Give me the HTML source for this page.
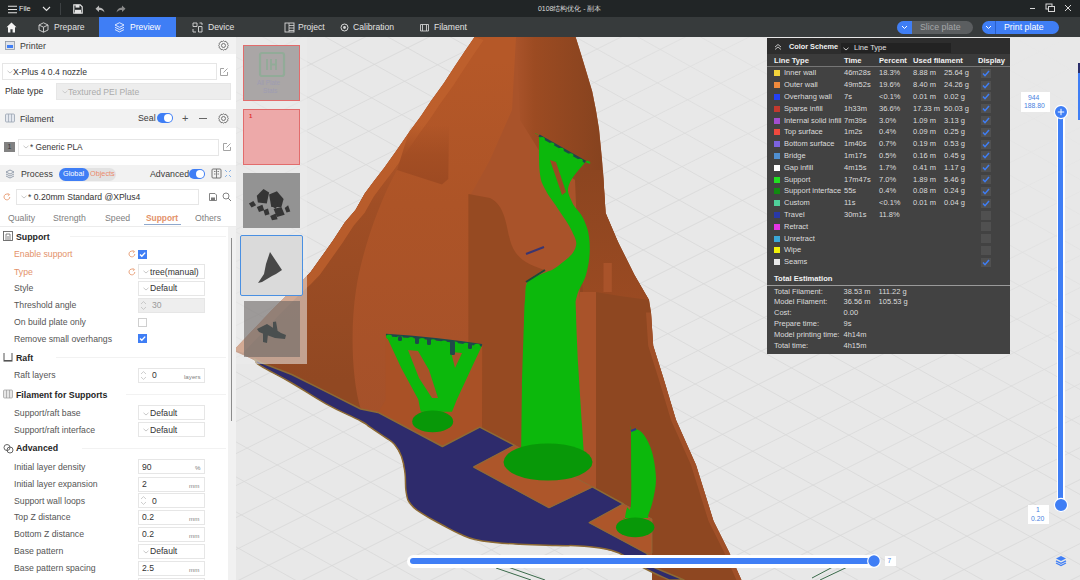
<!DOCTYPE html><html><head><meta charset="utf-8"><style>
*{margin:0;padding:0;box-sizing:border-box}
html,body{width:1080px;height:580px;overflow:hidden;background:#e9e9e9;font-family:"Liberation Sans",sans-serif}
.a{position:absolute;white-space:nowrap}
.tt{color:#e2e2e2;font-size:8.6px;line-height:10px}
.ht{font-size:8.8px;color:#3a3a3a;line-height:10px}
.lbl{font-size:8.7px;color:#555;line-height:10px}
.org{color:#e3926a}
.box{border:1px solid #e2e2e2;background:#fff}
.bt{font-size:8.6px;color:#333;line-height:10px}
.sec{font-size:8.8px;color:#262626;font-weight:bold;line-height:10px}
.unit{font-size:6.2px;color:#808080;line-height:6px}
.lg{font-size:7.5px;color:#dcdcdc;line-height:9px}
.lgb{font-size:7.6px;color:#f2f2f2;font-weight:bold;line-height:9px}
</style></head><body>
<div class="a " style="left:236px;top:37px;width:844px;height:543px;background:#e8e8e8"></div>
<svg class="a" style="left:0;top:0" width="1080" height="580" viewBox="0 0 1080 580"><defs><linearGradient id="fade" x1="1080" y1="37" x2="860" y2="330" gradientUnits="userSpaceOnUse"><stop offset="0" stop-color="#e8e8e8" stop-opacity="1"/><stop offset="0.3" stop-color="#e8e8e8" stop-opacity="0.8"/><stop offset="1" stop-color="#e8e8e8" stop-opacity="0"/></linearGradient><linearGradient id="og" x1="0" y1="0" x2="1" y2="0" gradientUnits="userSpaceOnUse" gradientTransform=""><stop offset="0" stop-color="#bd5d2b"/><stop offset="1" stop-color="#8a4420"/></linearGradient><linearGradient id="cone" x1="440" y1="0" x2="600" y2="0" gradientUnits="userSpaceOnUse"><stop offset="0" stop-color="#bc5c2a"/><stop offset="0.5" stop-color="#b3562a"/><stop offset="0.62" stop-color="#9b4c22"/><stop offset="1" stop-color="#87431f"/></linearGradient></defs><path d="M236 -1343.1 L1080 -870.5 M236 -1308.1 L1080 -835.5 M236 -1273.1 L1080 -800.5 M236 -1238.1 L1080 -765.5 M236 -1203.1 L1080 -730.5 M236 -1168.1 L1080 -695.5 M236 -1133.1 L1080 -660.5 M236 -1098.1 L1080 -625.5 M236 -1063.1 L1080 -590.5 M236 -1028.1 L1080 -555.5 M236 -993.1 L1080 -520.5 M236 -958.1 L1080 -485.5 M236 -923.1 L1080 -450.5 M236 -888.1 L1080 -415.5 M236 -853.1 L1080 -380.5 M236 -818.1 L1080 -345.5 M236 -783.1 L1080 -310.5 M236 -748.1 L1080 -275.5 M236 -713.1 L1080 -240.5 M236 -678.1 L1080 -205.5 M236 -643.1 L1080 -170.5 M236 -608.1 L1080 -135.5 M236 -573.1 L1080 -100.5 M236 -538.1 L1080 -65.5 M236 -503.1 L1080 -30.5 M236 -468.1 L1080 4.5 M236 -433.1 L1080 39.5 M236 -398.1 L1080 74.5 M236 -363.1 L1080 109.5 M236 -328.1 L1080 144.5 M236 -293.1 L1080 179.5 M236 -258.1 L1080 214.5 M236 -223.1 L1080 249.5 M236 -188.1 L1080 284.5 M236 -153.1 L1080 319.5 M236 -118.1 L1080 354.5 M236 -83.1 L1080 389.5 M236 -48.1 L1080 424.5 M236 -13.1 L1080 459.5 M236 21.9 L1080 494.5 M236 56.9 L1080 529.5 M236 91.9 L1080 564.5 M236 126.9 L1080 599.5 M236 161.9 L1080 634.5 M236 196.9 L1080 669.5 M236 231.9 L1080 704.5 M236 266.9 L1080 739.5 M236 301.9 L1080 774.5 M236 336.9 L1080 809.5 M236 371.9 L1080 844.5 M236 406.9 L1080 879.5 M236 441.9 L1080 914.5 M236 476.9 L1080 949.5 M236 511.9 L1080 984.5 M236 546.9 L1080 1019.5 M236 581.9 L1080 1054.5 M236 616.9 L1080 1089.5 M236 651.9 L1080 1124.5 M236 686.9 L1080 1159.5 M236 721.9 L1080 1194.5 M236 756.9 L1080 1229.5 M236 791.9 L1080 1264.5 M236 826.9 L1080 1299.5 M236 861.9 L1080 1334.5 M236 896.9 L1080 1369.5 M236 931.9 L1080 1404.5 M236 966.9 L1080 1439.5 M236 1001.9 L1080 1474.5 M236 1036.9 L1080 1509.5 M236 1071.9 L1080 1544.5 M236 1106.9 L1080 1579.5 M236 1141.9 L1080 1614.5 M236 1176.9 L1080 1649.5 M236 1211.9 L1080 1684.5 M236 1246.9 L1080 1719.5 M236 1281.9 L1080 1754.5 M236 1316.9 L1080 1789.5 M236 1351.9 L1080 1824.5 M236 1386.9 L1080 1859.5 M236 1421.9 L1080 1894.5 M236 -890.4 L1080 -1312.4 M236 -858.4 L1080 -1280.4 M236 -826.4 L1080 -1248.4 M236 -794.4 L1080 -1216.4 M236 -762.4 L1080 -1184.4 M236 -730.4 L1080 -1152.4 M236 -698.4 L1080 -1120.4 M236 -666.4 L1080 -1088.4 M236 -634.4 L1080 -1056.4 M236 -602.4 L1080 -1024.4 M236 -570.4 L1080 -992.4 M236 -538.4 L1080 -960.4 M236 -506.4 L1080 -928.4 M236 -474.4 L1080 -896.4 M236 -442.4 L1080 -864.4 M236 -410.4 L1080 -832.4 M236 -378.4 L1080 -800.4 M236 -346.4 L1080 -768.4 M236 -314.4 L1080 -736.4 M236 -282.4 L1080 -704.4 M236 -250.4 L1080 -672.4 M236 -218.4 L1080 -640.4 M236 -186.4 L1080 -608.4 M236 -154.4 L1080 -576.4 M236 -122.4 L1080 -544.4 M236 -90.4 L1080 -512.4 M236 -58.4 L1080 -480.4 M236 -26.4 L1080 -448.4 M236 5.6 L1080 -416.4 M236 37.6 L1080 -384.4 M236 69.6 L1080 -352.4 M236 101.6 L1080 -320.4 M236 133.6 L1080 -288.4 M236 165.6 L1080 -256.4 M236 197.6 L1080 -224.4 M236 229.6 L1080 -192.4 M236 261.6 L1080 -160.4 M236 293.6 L1080 -128.4 M236 325.6 L1080 -96.4 M236 357.6 L1080 -64.4 M236 389.6 L1080 -32.4 M236 421.6 L1080 -0.4 M236 453.6 L1080 31.6 M236 485.6 L1080 63.6 M236 517.6 L1080 95.6 M236 549.6 L1080 127.6 M236 581.6 L1080 159.6 M236 613.6 L1080 191.6 M236 645.6 L1080 223.6 M236 677.6 L1080 255.6 M236 709.6 L1080 287.6 M236 741.6 L1080 319.6 M236 773.6 L1080 351.6 M236 805.6 L1080 383.6 M236 837.6 L1080 415.6 M236 869.6 L1080 447.6 M236 901.6 L1080 479.6 M236 933.6 L1080 511.6 M236 965.6 L1080 543.6 M236 997.6 L1080 575.6 M236 1029.6 L1080 607.6 M236 1061.6 L1080 639.6 M236 1093.6 L1080 671.6 M236 1125.6 L1080 703.6 M236 1157.6 L1080 735.6 M236 1189.6 L1080 767.6 M236 1221.6 L1080 799.6 M236 1253.6 L1080 831.6 M236 1285.6 L1080 863.6 M236 1317.6 L1080 895.6 M236 1349.6 L1080 927.6 M236 1381.6 L1080 959.6 M236 1413.6 L1080 991.6 M236 1445.6 L1080 1023.6 M236 1477.6 L1080 1055.6 M236 1509.6 L1080 1087.6 M236 1541.6 L1080 1119.6 M236 1573.6 L1080 1151.6 M236 1605.6 L1080 1183.6 M236 1637.6 L1080 1215.6 M236 1669.6 L1080 1247.6 M236 1701.6 L1080 1279.6 M236 1733.6 L1080 1311.6 M236 1765.6 L1080 1343.6 M236 1797.6 L1080 1375.6 M236 1829.6 L1080 1407.6 M236 1861.6 L1080 1439.6 M236 1893.6 L1080 1471.6 M236 1925.6 L1080 1503.6 M236 1957.6 L1080 1535.6 M236 1989.6 L1080 1567.6 M236 2021.6 L1080 1599.6 M236 2053.6 L1080 1631.6 M236 2085.6 L1080 1663.6 M236 2117.6 L1080 1695.6 M236 2149.6 L1080 1727.6 M236 2181.6 L1080 1759.6 M236 2213.6 L1080 1791.6 M236 2245.6 L1080 1823.6 M236 2277.6 L1080 1855.6" stroke="#d8d8d8" stroke-width="0.8" fill="none"/><rect x="236" y="37" width="844" height="543" fill="url(#fade)"/><polygon points="474.6,37 575.6,37 581.1,54.5 586.7,73 592.2,91.6 595.9,110 599,129 602,160 603.5,180 605.6,213 618,242 634.6,275.3 649,300 651,312.6 653.2,345.7 663.6,378.8 676,420 696,465 713.5,521 729,552 741.4,580 669,580 643,567.5 619,553 600,548 580,545.9 556,545.5 520,544.3 495,542.5 475,539.5 460,534 442.4,525 423.1,514.1 411,504.5 406.2,492.4 405,473.1 401.4,456.2 394.1,444.1 384.5,436.9 370,427.2 360.7,421 326,403.8 291.7,383 260.7,365.9 256,361 234,350 252,331 271,311 290,292 302,281 310.7,272 321,257.6 333.4,240 344.8,222.4 355.5,210 364.8,193.4 374.1,181 384.5,167.6 396.9,150 410,131 421,116 431,101 444,83 455,66 465,51 474.6,37" fill="#a9532a"/><linearGradient id="cg2" x1="516" y1="0" x2="600" y2="0" gradientUnits="userSpaceOnUse"><stop offset="0" stop-color="#9c4b22" stop-opacity="0"/><stop offset="0.22" stop-color="#9c4b22" stop-opacity="1"/><stop offset="1" stop-color="#87431f" stop-opacity="1"/></linearGradient><polygon points="516,37 575.6,37 581.1,54.5 586.7,73 592.2,91.6 595.9,110 599,129 602,160 603.5,180 603.5,180 575,180 545,160 520,120" fill="url(#cg2)"/><linearGradient id="fw" x1="0" y1="60" x2="0" y2="420" gradientUnits="userSpaceOnUse"><stop offset="0" stop-color="#b55828"/><stop offset="0.4" stop-color="#ad5427"/><stop offset="1" stop-color="#a5512a"/></linearGradient><polygon points="234,350 252,331 271,311 290,292 302,281 310.7,272 321,257.6 333.4,240 344.8,222.4 355.5,210 364.8,193.4 374.1,181 384.5,167.6 396.9,150 410,131 421,116 431,101 444,83 455,66 465,51 474.6,37 516,37 512,110 490,160 470,196 468,420 378,412 360.7,409 326,391.7 291.7,374.5 262,363 236,352" fill="url(#fw)"/><linearGradient id="sf" x1="0" y1="110" x2="0" y2="380" gradientUnits="userSpaceOnUse"><stop offset="0" stop-color="#ad5529" stop-opacity="0"/><stop offset="0.35" stop-color="#a04e25"/><stop offset="1" stop-color="#914822"/></linearGradient><path d="M421 116 L421 116 L410 131 L396.9 150 L384.5 167.6 L374.1 181 L364.8 193.4 L355.5 210 L344.8 222.4 L333.4 240 L321 257.6 L310.7 272 L302 281 L290 292 L271 311 L252 331 L234 350 L256 361 L291.7 374.5 L326 391.7 L360.7 409 L360.7 409 C352 380 350 330 356 290 C362 250 380 200 397 170 L421 116 Z" fill="url(#sf)"/><polygon points="234,350 252,331 271,311 290,292 302,281 310.7,272 321,257.6 333.4,240 344.8,222.4 355.5,210 364.8,193.4 374.1,181 384.5,167.6 396.9,150 410,131 421,116 431,101 444,83 455,66 465,51 474.6,37 483.6,40 474,54 464,69 453,86 440,104 430,119 419,134 405.9,153 393.5,170.6 383.1,184 373.8,196.4 364.5,213 353.8,225.4 342.4,243 330,260.6 319.7,275 311,284 299,295 280,314 261,334 243,353" fill="#c0622d" opacity="0.75"/><linearGradient id="ng" x1="0" y1="125" x2="0" y2="185" gradientUnits="userSpaceOnUse"><stop offset="0" stop-color="#a24d23" stop-opacity="0"/><stop offset="0.5" stop-color="#a24d23" stop-opacity="0.9"/><stop offset="1" stop-color="#9d4a22"/></linearGradient><path d="M397 170 L442 184.4 L448.3 179 L449 125 L412 122 Z" fill="url(#ng)"/><path d="M468.4 194 L490 198 C505 205 506 225 510 240 C515 260 530 265 545 270 L526 282 L521.2 454 L479.8 427.2 L468.4 421 Z" fill="#964a22"/><polygon points="385.7,334.5 482.2,345.3 482,427 442.4,446.7 378,412.4 385.7,400" fill="#a95126"/><polygon points="575,180 603.5,180 605.6,213 618,242 634.6,275.3 649,300 651,312.6 653.2,345.7 663.6,378.8 676,420 696,465 713.5,521 729,552 741.4,580 652,580 652,519 623.5,504 592.4,486.9 596,300 580,300" fill="#8e4721"/><polygon points="580,292 596,292 596,489 580,480" fill="#a9532a"/><linearGradient id="cg3" x1="0" y1="170" x2="0" y2="300" gradientUnits="userSpaceOnUse"><stop offset="0" stop-color="#8c4520"/><stop offset="1" stop-color="#9a4a22"/></linearGradient><polygon points="575,170 603,170 603.5,180 605.6,213 618,242 634.6,275.3 649,300 620,296 596,292 583,292" fill="url(#cg3)"/><polygon points="603.5,263 611.8,263 611.8,292 603.5,292" fill="#a9532a"/><polygon points="651,312.6 653.2,345.7 663.6,378.8 676,420 696,465 713.5,521 729,552 741.4,580 736.4,580 724,552 708.5,521 691,465 671,420 658.6,378.8 648.2,345.7 646,312.6" fill="#a5532a" opacity="0.8"/><path d="M256.0 361.0 C257.1 362.1 252.4 360.8 260.7 365.9 C269.0 371.0 276.5 374.2 291.7 383.0 C306.9 391.8 309.9 394.9 326.0 403.8 C342.1 412.7 350.4 415.5 360.7 421.0 C371.0 426.5 364.4 423.5 370.0 427.2 C375.6 430.9 378.9 433.0 384.5 436.9 C390.1 440.8 390.2 439.6 394.1 444.1 C398.0 448.6 398.9 449.4 401.4 456.2 C403.9 463.0 403.9 464.7 405.0 473.1 C406.1 481.5 404.8 485.1 406.2 492.4 C407.6 499.7 407.1 499.4 411.0 504.5 C414.9 509.6 415.8 509.3 423.1 514.1 C430.4 518.9 433.8 520.4 442.4 525.0 C451.0 529.6 452.4 530.6 460.0 534.0 C467.6 537.4 466.8 537.5 475.0 539.5 C483.2 541.5 484.5 541.4 495.0 542.5 C505.5 543.6 505.8 543.6 520.0 544.3 C534.2 545.0 542.0 545.1 556.0 545.5 C570.0 545.9 569.7 545.3 580.0 545.9 C590.3 546.5 590.9 546.3 600.0 548.0 C609.1 549.7 609.0 548.5 619.0 553.0 C629.0 557.5 631.3 561.2 643.0 567.5 C654.7 573.8 662.9 577.1 669.0 580.0 L684 580 L653 567 L646.7 553.3 L589.3 522.6 L623.5 504 L592.4 486.9 L549 507.6 L473.8 467 L514.8 445.3 L479.8 427.2 L442.4 446.5 L378 412.4 L360.7 409 L326 391.7 L291.7 374.5 L262 363 L254 359 Z" fill="#2e2b6c" stroke="#8d6b35" stroke-width="1.5" stroke-linejoin="round"/><polygon points="473.8,467 514.8,445.3 592.4,486.9 549,507.6" fill="#ad562a" stroke="#8f6a3a" stroke-width="0.8"/><polygon points="589.3,522.6 623.5,504 652,519 652,553 646.7,553.3" fill="#ad562a" stroke="#8f6a3a" stroke-width="0.8"/><polygon points="385.7,334.5 410,338 440,341 482.2,345.3 471.4,368.3 456.9,399.6 452,411.7 420.7,411.7 418.3,399.6 401.4,368.3" fill="#0cb80c"/><polygon points="408,350 418,351 429,370 438,398 432,398 419,378" fill="#a85229"/><polygon points="451,352 462,353 455,368" fill="#a85229"/><path d="M386 335 Q434 338 482 345.3" stroke="#1d4a4a" stroke-width="2.6" fill="none"/><ellipse cx="389" cy="336.815" rx="3" ry="2.2" fill="#0cb80c"/><ellipse cx="400" cy="337.97" rx="3" ry="2.2" fill="#0cb80c"/><ellipse cx="411" cy="339.125" rx="3" ry="2.2" fill="#0cb80c"/><ellipse cx="422" cy="340.28" rx="3" ry="2.2" fill="#0cb80c"/><ellipse cx="433" cy="341.435" rx="3" ry="2.2" fill="#0cb80c"/><ellipse cx="444" cy="342.59" rx="3" ry="2.2" fill="#0cb80c"/><ellipse cx="455" cy="343.745" rx="3" ry="2.2" fill="#0cb80c"/><ellipse cx="466" cy="344.9" rx="3" ry="2.2" fill="#0cb80c"/><ellipse cx="477" cy="346.055" rx="3" ry="2.2" fill="#0cb80c"/><rect x="398" y="336" width="4" height="5" rx="1.5" fill="#1f4a4a"/><rect x="415" y="337" width="4" height="7" rx="1.5" fill="#1f4a4a"/><rect x="427" y="338" width="4" height="7" rx="1.5" fill="#1f4a4a"/><rect x="450" y="341" width="5" height="14" rx="1.5" fill="#1f4a4a"/><rect x="468" y="343" width="4" height="6" rx="1.5" fill="#1f4a4a"/><ellipse cx="432.7" cy="421.4" rx="20.5" ry="10.9" fill="#089808"/><path d="M539.0 135.5 C539.0 134.6 529.7 130.2 539.0 135.5 C548.3 140.8 576.1 156.6 585.4 161.9 C594.7 167.2 588.7 157.4 585.4 161.9 C582.1 166.4 571.8 176.4 569.1 184.4 C566.4 192.4 569.1 195.0 572.0 202.0 C574.9 209.0 580.3 211.4 583.8 219.6 C587.3 227.8 589.0 232.5 589.6 243.0 C590.2 253.5 589.2 261.8 586.7 272.3 C584.2 282.8 579.1 287.6 577.0 295.7 C574.9 303.8 575.8 299.5 576.0 313.0 C576.2 326.5 577.6 353.0 578.0 363.0 C578.4 373.0 577.2 350.6 578.0 363.0 C578.8 375.4 580.8 406.8 582.0 425.0 C583.2 443.2 583.6 448.2 584.0 454.0 C584.4 459.8 596.6 454.0 584.0 454.0 C571.4 454.0 533.8 454.0 521.2 454.0 C508.6 454.0 521.0 468.2 521.2 454.0 C521.4 439.8 521.8 397.2 522.0 383.0 C522.2 368.8 521.6 395.4 522.0 383.0 C522.4 370.6 523.4 337.6 524.0 321.0 C524.6 304.4 524.2 308.0 525.0 300.0 C525.8 292.0 524.5 286.3 528.1 281.0 C531.7 275.7 536.9 276.4 542.8 273.5 C548.7 270.6 551.0 271.3 557.4 266.4 C563.8 261.5 572.1 255.9 575.0 248.9 C577.9 241.9 575.5 239.5 572.0 231.3 C568.5 223.1 562.7 216.1 557.4 207.9 C552.1 199.7 549.2 197.3 545.7 190.3 C542.2 183.3 541.1 182.8 539.8 172.7 C538.5 162.6 539.2 147.4 539.0 140.0 C538.8 132.6 539.0 136.4 539.0 135.5 Z" fill="#0cb80c"/><polygon points="550,160 556,162 566,192 562,195" fill="#9a4a22"/><path d="M539 135.5 L585.4 161.9" stroke="#1d4a4a" stroke-width="2.4" fill="none"/><ellipse cx="542.0" cy="139.207" rx="2.8" ry="2.2" fill="#0cb80c"/><ellipse cx="551.5" cy="144.6125" rx="2.8" ry="2.2" fill="#0cb80c"/><ellipse cx="561.0" cy="150.018" rx="2.8" ry="2.2" fill="#0cb80c"/><ellipse cx="570.5" cy="155.4235" rx="2.8" ry="2.2" fill="#0cb80c"/><ellipse cx="580.0" cy="160.829" rx="2.8" ry="2.2" fill="#0cb80c"/><path d="M526 282 L545 270" stroke="#1d4a3a" stroke-width="2" fill="none"/><path d="M526 254 L544 247" stroke="#3a3570" stroke-width="2" fill="none"/><ellipse cx="548" cy="462" rx="44.5" ry="18.6" fill="#089808"/><path d="M631.0 431.0 C631.8 430.7 633.8 428.3 636.0 429.0 C638.2 429.7 641.3 431.2 644.0 435.0 C646.7 438.8 650.0 444.8 652.0 452.0 C654.0 459.2 655.8 470.0 656.0 478.0 C656.2 486.0 654.3 493.7 653.0 500.0 C651.7 506.3 648.8 513.0 648.0 516.0 C647.2 519.0 651.8 517.7 648.0 518.0 C644.2 518.3 628.8 518.0 625.0 518.0 C621.2 518.0 624.7 519.7 625.0 518.0 C625.3 516.3 626.0 510.5 627.0 508.0 C628.0 505.5 630.3 515.8 631.0 503.0 C631.7 490.2 631.0 443.0 631.0 431.0 C631.0 419.0 630.2 431.3 631.0 431.0 Z" fill="#0cb80c"/><path d="M631 431 L636 429" stroke="#2a3a8a" stroke-width="2"/><ellipse cx="635.2" cy="527.3" rx="19.2" ry="9.9" fill="#089808"/><path d="M496 568 L531 580 M505 566 L545 580 M820 580 L858 562 L846 560 L812 578" stroke="#3a6a4a" stroke-width="1" fill="none"/></svg>
<div class="a " style="left:236px;top:37px;width:71px;height:327px;background:rgba(235,235,235,0.55)"></div>
<div class="a " style="left:243px;top:45px;width:57px;height:56px;background:#aaa6a6;border:1px solid #e26c6c"></div>
<svg class="a" style="left:258px;top:51px" width="28" height="27" viewBox="0 0 28 27"><rect x="2" y="2" width="24" height="23" rx="2" fill="none" stroke="#92ab98" stroke-width="2.2"/><path d="M9 8V19M13 8V19M18 8V19M13 13.5H18" stroke="#92ab98" stroke-width="1.8"/></svg>
<div class="a bt" style="left:257px;top:78px;font-size:6.3px;color:#9e9cb2">All Plate</div>
<div class="a bt" style="left:263px;top:86px;font-size:6.3px;color:#9e9cb2">Stats</div>
<div class="a " style="left:243px;top:109px;width:57px;height:56px;background:#eda9a9;border:1px solid #e26c6c"></div>
<div class="a bt" style="left:249px;top:111px;font-size:6px;color:#e03030;font-weight:bold">1</div>
<div class="a " style="left:243px;top:173px;width:57px;height:55px;background:#939393"></div>
<svg class="a" style="left:240px;top:170px" width="64" height="58" viewBox="0 0 64 58"><polygon points="16.8,25.7 23.5,19.0 29.1,22.4 26.8,33.6 17.9,32.4" fill="#353535"/><polygon points="29.1,24.6 36.9,21.3 43.6,29.1 41.4,36.9 31.3,36.9" fill="#353535"/><polygon points="8.9,33.6 13.4,30.9 16.1,35.3 11.6,37.6" fill="#353535"/><polygon points="16.8,36.9 22.4,34.7 24.2,40.3 19.0,42.1" fill="#353535"/><polygon points="23.5,40.3 28.0,38.5 29.5,44.3 25.1,45.4" fill="#353535"/><polygon points="33.6,39.1 41.4,36.9 44.7,44.7 36.9,47.0" fill="#353535"/><polygon points="30.2,45.9 35.8,43.6 37.6,49.2 32.0,50.3" fill="#353535"/><polygon points="44.7,38.0 48.1,35.3 50.3,41.4 46.5,42.5" fill="#353535"/><polygon points="33.6,30.2 38.0,33.6 35.8,39.1 31.3,35.8" fill="#353535"/></svg>
<div class="a " style="left:240px;top:235px;width:63px;height:61px;background:#dadada;border:1.5px solid #4a90e2;border-radius:2px"></div>
<svg class="a" style="left:256px;top:250px" width="30" height="36" viewBox="0 0 30 36"><path d="M14 2L26 20L20 24L16 26L6 32L2 33L8 24L10 14Z" fill="#484848"/></svg>
<div class="a " style="left:244px;top:301px;width:56px;height:56px;background:rgba(105,100,98,0.6)"></div>
<svg class="a" style="left:255px;top:321px" width="36" height="26" viewBox="0 0 36 26"><path d="M2 8L12 3L26 12L31 14L30 18L20 17L9 13L4 11Z M18 1L21 0.5L23 12L18 12Z M8 12L13 13L12 22L8 21Z" fill="#4a4f4f"/></svg>
<div class="a " style="left:1078px;top:63px;width:2px;height:57px;background:#3f7ef5"></div>
<div class="a " style="left:1078px;top:63px;width:2px;height:10px;background:#2a2e6a"></div>
<div class="a " style="left:1056.5px;top:110px;width:8.5px;height:398px;background:#fff;border-radius:4px"></div>
<div class="a " style="left:1058.2px;top:112px;width:5px;height:393px;background:#3f7ef5"></div>
<svg class="a" style="left:1053px;top:104px" width="16" height="16" viewBox="0 0 16 16"><circle cx="8" cy="8" r="6.6" fill="#3f7ef5" stroke="#fff" stroke-width="1.2"/><path d="M8 4.8V11.2M4.8 8H11.2" stroke="#fff" stroke-width="1"/></svg>
<svg class="a" style="left:1053px;top:497px" width="16" height="16" viewBox="0 0 16 16"><circle cx="8" cy="8" r="6.6" fill="#3f7ef5" stroke="#fff" stroke-width="1.2"/></svg>
<div class="a " style="left:1021px;top:92px;width:29px;height:20px;background:#fff"></div>
<div class="a bt" style="left:1028px;top:92.5px;font-size:6.8px;color:#4a7fe0">944</div>
<div class="a bt" style="left:1024px;top:101px;font-size:6.8px;color:#4a7fe0">188.80</div>
<div class="a " style="left:1027.5px;top:505px;width:21px;height:19px;background:#fff"></div>
<div class="a bt" style="left:1036px;top:505px;font-size:6.8px;color:#4a7fe0">1</div>
<div class="a bt" style="left:1031px;top:513.5px;font-size:6.8px;color:#4a7fe0">0.20</div>
<svg class="a" style="left:1055px;top:555px" width="12" height="12" viewBox="0 0 12 12"><path d="M6 1L11 3.5L6 6L1 3.5Z" fill="#3f7ef5"/><path d="M1 5.8L6 8.3L11 5.8M1 8L6 10.5L11 8" stroke="#3f7ef5" stroke-width="1.3" fill="none"/></svg>
<div class="a " style="left:407px;top:554.5px;width:470px;height:13px;background:#fff;border-radius:6.5px"></div>
<div class="a " style="left:410px;top:558px;width:464px;height:6px;background:#3f7ef5;border-radius:3px"></div>
<svg class="a" style="left:866px;top:553px" width="16" height="16" viewBox="0 0 16 16"><circle cx="8" cy="8" r="6.3" fill="#3f7ef5" stroke="#fff" stroke-width="1.2"/></svg>
<div class="a " style="left:884.5px;top:556px;width:11px;height:10px;background:#fff"></div>
<div class="a bt" style="left:887.5px;top:556px;font-size:6.5px;color:#4a7fe0">7</div>
<div class="a " style="left:0px;top:0px;width:1080px;height:17px;background:#212526"></div>
<div class="a " style="left:0px;top:17px;width:1080px;height:20px;background:#373b3c"></div>
<svg class="a" style="left:7px;top:5px" width="11" height="9" viewBox="0 0 11 9"><path d="M1 1.2H10M1 4.5H10M1 7.8H10" stroke="#e4e4e4" stroke-width="1.1"/></svg>
<div class="a tt" style="left:19px;top:4px;font-size:7.2px;color:#ececec">File</div>
<svg class="a" style="left:42px;top:6px" width="9" height="6" viewBox="0 0 9 6"><path d="M1 1L4.5 4.5L8 1" stroke="#e4e4e4" stroke-width="1.1" fill="none"/></svg>
<div class="a " style="left:60px;top:3px;width:1px;height:12px;background:#3d4143"></div>
<svg class="a" style="left:73px;top:4px" width="10" height="10" viewBox="0 0 10 10"><path d="M0.8 0.8H7.2L9.2 2.8V9.2H0.8Z" fill="none" stroke="#e4e4e4" stroke-width="1.2"/><rect x="2.5" y="0.8" width="4" height="2.8" fill="#e4e4e4"/><rect x="2" y="5.8" width="6" height="3.4" fill="#e4e4e4"/></svg>
<svg class="a" style="left:95px;top:5px" width="10" height="8" viewBox="0 0 10 8"><path d="M4 0.5L0.5 3.8L4 7V5C6.5 5 8 5.5 9.5 7.5C9 4.5 7.5 2.8 4 2.6Z" fill="#b8b8b8"/></svg>
<svg class="a" style="left:116px;top:5px" width="10" height="8" viewBox="0 0 10 8"><path d="M6 0.5L9.5 3.8L6 7V5C3.5 5 2 5.5 0.5 7.5C1 4.5 2.5 2.8 6 2.6Z" fill="#8a8a8a"/></svg>
<div class="a tt" style="left:538px;top:4px;font-size:6.9px;color:#dcdcdc">0108结构优化 - 副本</div>
<div class="a " style="left:1030px;top:8px;width:5px;height:1px;background:#d8d8d8"></div>
<svg class="a" style="left:1045px;top:3px" width="11" height="10" viewBox="0 0 11 10"><rect x="1" y="1" width="6" height="5" fill="none" stroke="#d8d8d8" stroke-width="1"/><rect x="3.5" y="3.5" width="6" height="5" fill="#202325" stroke="#d8d8d8" stroke-width="1"/></svg>
<svg class="a" style="left:1064px;top:4px" width="8" height="8" viewBox="0 0 8 8"><path d="M1 1L7 7M7 1L1 7" stroke="#d8d8d8" stroke-width="1"/></svg>
<svg class="a" style="left:6px;top:22px" width="11" height="11" viewBox="0 0 11 11"><path d="M5.5 0.5L10.5 5.3H9V10.5H6.6V7.3H4.4V10.5H2V5.3H0.5Z" fill="#f4f4f4"/></svg>
<svg class="a" style="left:38px;top:22px" width="11" height="11" viewBox="0 0 11 11"><path d="M5.5 0.8L10 3V8L5.5 10.2L1 8V3Z M1 3L5.5 5.2L10 3 M5.5 5.2V10.2" fill="none" stroke="#d8d8d8" stroke-width="0.9"/></svg>
<div class="a tt" style="left:54px;top:22px;">Prepare</div>
<div class="a " style="left:99px;top:17px;width:77px;height:20px;background:#3f7ef5"></div>
<svg class="a" style="left:114px;top:22px" width="11" height="11" viewBox="0 0 11 11"><path d="M5.5 0.7L10 3L5.5 5.3L1 3Z M1 5.3L5.5 7.6L10 5.3 M1 7.6L5.5 9.9L10 7.6" fill="none" stroke="#f0f4ff" stroke-width="0.9"/></svg>
<div class="a tt" style="left:130px;top:22px;color:#fff">Preview</div>
<svg class="a" style="left:192px;top:22px" width="11" height="11" viewBox="0 0 11 11"><path d="M1 1H5V4.5H1Z M6.5 4.5H10V10H6.5Z M1 7V10H4 M7.5 1H10V3" fill="none" stroke="#d8d8d8" stroke-width="0.9"/></svg>
<div class="a tt" style="left:208px;top:22px;">Device</div>
<svg class="a" style="left:284px;top:22px" width="11" height="11" viewBox="0 0 11 11"><rect x="1" y="1" width="9" height="9" fill="none" stroke="#d8d8d8" stroke-width="0.9"/><path d="M5 1V10 M5 3.5H10 M5 6H10 M5 8.5H10" stroke="#d8d8d8" stroke-width="0.8"/></svg>
<div class="a tt" style="left:298px;top:22px;">Project</div>
<svg class="a" style="left:340px;top:23px" width="9" height="9" viewBox="0 0 9 9"><circle cx="4.5" cy="4.5" r="3.5" fill="none" stroke="#d8d8d8" stroke-width="1"/><circle cx="4.5" cy="4.5" r="1.4" fill="#d8d8d8"/></svg>
<div class="a tt" style="left:353px;top:22px;">Calibration</div>
<svg class="a" style="left:419px;top:22px" width="11" height="11" viewBox="0 0 11 11"><path d="M1.5 2.5H9.5V9H1.5Z M3.5 2.5V9 M7.5 2.5V9" fill="none" stroke="#cfcfcf" stroke-width="0.9"/></svg>
<div class="a tt" style="left:434px;top:22px;">Filament</div>
<div class="a " style="left:897px;top:20.5px;width:76px;height:13.5px;background:#5b5e60;border-radius:7px"></div>
<div class="a " style="left:897px;top:20.5px;width:15px;height:13.5px;background:#3f7ef5;border-radius:7px 0 0 7px"></div>
<svg class="a" style="left:901px;top:25px" width="7" height="5" viewBox="0 0 7 5"><path d="M1 1L3.5 3.5L6 1" stroke="#fff" stroke-width="1" fill="none"/></svg>
<div class="a tt" style="left:920px;top:22.3px;color:#a4a6a8;font-size:8.8px">Slice plate</div>
<div class="a " style="left:982px;top:20.5px;width:77px;height:13.5px;background:#3f7ef5;border-radius:7px"></div>
<div class="a " style="left:995px;top:20.5px;width:1px;height:13.5px;background:#2a5fc8"></div>
<svg class="a" style="left:985px;top:25px" width="7" height="5" viewBox="0 0 7 5"><path d="M1 1L3.5 3.5L6 1" stroke="#fff" stroke-width="1" fill="none"/></svg>
<div class="a tt" style="left:1004px;top:22.3px;color:#fff;font-size:8.8px">Print plate</div>
<div class="a " style="left:0px;top:37px;width:236px;height:543px;background:#ffffff"></div>
<div class="a " style="left:0px;top:37px;width:236px;height:17px;background:#f2f2f2"></div>
<svg class="a" style="left:5px;top:41px" width="10" height="9" viewBox="0 0 10 9"><rect x="0.5" y="0.5" width="9" height="8" fill="#dfe3ea" stroke="#8c96a3" stroke-width="0.8"/><rect x="2" y="4" width="6" height="3" fill="#3f7ef5"/></svg>
<div class="a ht" style="left:20px;top:40.5px;">Printer</div>
<svg class="a" style="left:218px;top:39.5px" width="11" height="11" viewBox="0 0 11 11"><circle cx="5.5" cy="5.5" r="2" fill="none" stroke="#6a6a6a" stroke-width="0.9"/><path d="M5.5 0.8L6.6 1.6L8 1.3L8.6 2.6L9.9 3.3L9.7 4.6L10.3 5.5L9.7 6.4L9.9 7.7L8.6 8.4L8 9.7L6.6 9.4L5.5 10.2L4.4 9.4L3 9.7L2.4 8.4L1.1 7.7L1.3 6.4L0.7 5.5L1.3 4.6L1.1 3.3L2.4 2.6L3 1.3L4.4 1.6Z" fill="none" stroke="#6a6a6a" stroke-width="0.9"/></svg>
<div class="a " style="left:2px;top:63px;width:215px;height:17px;border:1px solid #e6e6e6;background:#fff"></div>
<svg class="a" style="left:7px;top:69.5px" width="6" height="4" viewBox="0 0 6 4"><path d="M0.5 0.8L3 3L5.5 0.8" stroke="#b0b0b0" stroke-width="0.7" fill="none"/></svg>
<div class="a bt" style="left:13px;top:66.5px;">X-Plus 4 0.4 nozzle</div>
<svg class="a" style="left:219px;top:66.5px" width="10" height="10" viewBox="0 0 10 10"><path d="M5 1.5H1.5V8.5H8.5V5" fill="none" stroke="#9a9a9a" stroke-width="0.9"/><path d="M4.5 5.5L8.5 1.5" stroke="#9a9a9a" stroke-width="0.9"/></svg>
<div class="a bt" style="left:5px;top:86px;color:#2e2e2e">Plate type</div>
<div class="a " style="left:56px;top:83px;width:175px;height:17px;background:#ededed;border:1px solid #e6e6e6"></div>
<svg class="a" style="left:62px;top:89.5px" width="6" height="4" viewBox="0 0 6 4"><path d="M0.5 0.8L3 3L5.5 0.8" stroke="#bdbdbd" stroke-width="0.7" fill="none"/></svg>
<div class="a bt" style="left:68px;top:86.5px;color:#ababab">Textured PEI Plate</div>
<div class="a " style="left:0px;top:109px;width:236px;height:19px;background:#f2f2f2"></div>
<svg class="a" style="left:5px;top:113px" width="10" height="10" viewBox="0 0 10 10"><rect x="0.5" y="1" width="9" height="8" rx="1" fill="#e4e8ef" stroke="#98a2b0" stroke-width="0.8"/><path d="M3.5 1V9M6.5 1V9" stroke="#98a2b0" stroke-width="0.7"/></svg>
<div class="a ht" style="left:20px;top:113.5px;">Filament</div>
<div class="a ht" style="left:138px;top:113px;">Seal</div>
<div class="a " style="left:157px;top:113px;width:16px;height:10px;background:#3f7ef5;border-radius:5px"></div>
<div class="a " style="left:164px;top:114px;width:8px;height:8px;background:#fff;border-radius:4px"></div>
<div class="a ht" style="left:182px;top:113px;font-size:11px;color:#555">+</div>
<div class="a " style="left:199px;top:118px;width:8px;height:1px;background:#666"></div>
<svg class="a" style="left:218px;top:113.0px" width="11" height="11" viewBox="0 0 11 11"><circle cx="5.5" cy="5.5" r="2" fill="none" stroke="#6a6a6a" stroke-width="0.9"/><path d="M5.5 0.8L6.6 1.6L8 1.3L8.6 2.6L9.9 3.3L9.7 4.6L10.3 5.5L9.7 6.4L9.9 7.7L8.6 8.4L8 9.7L6.6 9.4L5.5 10.2L4.4 9.4L3 9.7L2.4 8.4L1.1 7.7L1.3 6.4L0.7 5.5L1.3 4.6L1.1 3.3L2.4 2.6L3 1.3L4.4 1.6Z" fill="none" stroke="#6a6a6a" stroke-width="0.9"/></svg>
<div class="a " style="left:4px;top:142px;width:11px;height:10px;background:#828282"></div>
<div class="a bt" style="left:7.5px;top:142px;font-size:7px;color:#333">1</div>
<div class="a " style="left:18px;top:139px;width:201px;height:16.5px;border:1px solid #e6e6e6;background:#fff"></div>
<svg class="a" style="left:23px;top:145px" width="6" height="4" viewBox="0 0 6 4"><path d="M0.5 0.8L3 3L5.5 0.8" stroke="#b0b0b0" stroke-width="0.7" fill="none"/></svg>
<div class="a bt" style="left:30px;top:142px;font-size:8.3px">* Generic PLA</div>
<svg class="a" style="left:222px;top:142px" width="10" height="10" viewBox="0 0 10 10"><path d="M5 1.5H1.5V8.5H8.5V5" fill="none" stroke="#9a9a9a" stroke-width="0.9"/><path d="M4.5 5.5L8.5 1.5" stroke="#9a9a9a" stroke-width="0.9"/></svg>
<div class="a " style="left:0px;top:165px;width:236px;height:17px;background:#f2f2f2"></div>
<svg class="a" style="left:5px;top:169px" width="10" height="10" viewBox="0 0 10 10"><path d="M1 3L5 1L9 3L5 5Z M1 5L5 7L9 5 M1 7L5 9L9 7" fill="none" stroke="#8b96a6" stroke-width="0.9"/></svg>
<div class="a ht" style="left:21px;top:168.5px;">Process</div>
<div class="a " style="left:59px;top:167.5px;width:57px;height:13px;background:#e2e2e2;border-radius:6.5px"></div>
<div class="a " style="left:59px;top:167.5px;width:30px;height:13px;background:#3f7ef5;border-radius:6.5px"></div>
<div class="a bt" style="left:63px;top:169px;font-size:7.3px;color:#fff">Global</div>
<div class="a bt" style="left:90px;top:169px;font-size:7.3px;color:#ea8a6d">Objects</div>
<div class="a ht" style="left:150px;top:168.5px;">Advanced</div>
<div class="a " style="left:189px;top:169px;width:16px;height:10px;background:#3f7ef5;border-radius:5px"></div>
<div class="a " style="left:196px;top:170px;width:8px;height:8px;background:#fff;border-radius:4px"></div>
<svg class="a" style="left:211px;top:168px" width="11" height="11" viewBox="0 0 11 11"><rect x="1" y="1" width="9" height="9" rx="1" fill="none" stroke="#666" stroke-width="0.9"/><path d="M5.5 1V10M3 3.5H4.5M3 6H4.5M6.5 3.5H8M6.5 6H8" stroke="#666" stroke-width="0.8"/></svg>
<svg class="a" style="left:224px;top:169px" width="8" height="9" viewBox="0 0 8 9"><path d="M1 1L3 3M7 1L5 3M1 8L3 6M7 8L5 6" stroke="#8ab4e8" stroke-width="1"/></svg>
<svg class="a" style="left:3px;top:193px" width="8" height="8" viewBox="0 0 8 8"><path d="M6.8 4A2.9 2.9 0 1 1 5.6 1.6" fill="none" stroke="#e79a70" stroke-width="0.9"/><path d="M4.6 0.4L6.6 1.5L5 3.2" fill="none" stroke="#e79a70" stroke-width="0.8"/></svg>
<div class="a " style="left:16px;top:189px;width:183px;height:15.5px;border:1px solid #e6e6e6;background:#fff"></div>
<svg class="a" style="left:21px;top:195px" width="6" height="4" viewBox="0 0 6 4"><path d="M0.5 0.8L3 3L5.5 0.8" stroke="#b0b0b0" stroke-width="0.7" fill="none"/></svg>
<div class="a bt" style="left:28px;top:192px;">* 0.20mm Standard @XPlus4</div>
<svg class="a" style="left:209px;top:193px" width="8" height="8" viewBox="0 0 8 8"><path d="M0.5 0.5H6L7.5 2V7.5H0.5Z" fill="none" stroke="#777" stroke-width="0.9"/><rect x="2" y="4.5" width="4" height="3" fill="#777"/></svg>
<svg class="a" style="left:222px;top:192px" width="10" height="10" viewBox="0 0 10 10"><circle cx="4" cy="4" r="3" fill="none" stroke="#777" stroke-width="0.9"/><path d="M6.2 6.2L9 9" stroke="#777" stroke-width="1"/></svg>
<div class="a lbl" style="left:8px;top:213px;color:#808080">Quality</div>
<div class="a lbl" style="left:53px;top:213px;color:#808080">Strength</div>
<div class="a lbl" style="left:105px;top:213px;color:#808080">Speed</div>
<div class="a lbl" style="left:195px;top:213px;color:#808080">Others</div>
<div class="a lbl" style="left:146px;top:213px;color:#e3926a;font-weight:bold;font-size:8.4px">Support</div>
<div class="a " style="left:144px;top:224px;width:37px;height:1.2px;background:#8fa8cc"></div>
<div class="a " style="left:0px;top:226px;width:236px;height:1px;background:#ececec"></div>
<div class="a " style="left:228px;top:227px;width:8px;height:353px;background:#f1f1f1"></div>
<div class="a " style="left:230.5px;top:238px;width:1.6px;height:183px;background:#8c8c8c"></div>
<svg class="a" style="left:3px;top:231px" width="10" height="10" viewBox="0 0 10 10"><rect x="0.5" y="0.5" width="9" height="9" fill="none" stroke="#666" stroke-width="0.9"/><path d="M3 3H7V9.5M3 3V9.5M5 5V9.5" stroke="#666" stroke-width="0.8" fill="none"/></svg>
<div class="a sec" style="left:16px;top:231.5px;">Support</div>
<div class="a " style="left:70px;top:236.0px;width:156px;height:1px;background:#f2f2f2"></div>
<div class="a lbl org" style="left:14px;top:249px;">Enable support</div>
<svg class="a" style="left:128px;top:250px" width="8" height="8" viewBox="0 0 8 8"><path d="M6.8 4A2.9 2.9 0 1 1 5.6 1.6" fill="none" stroke="#e79a70" stroke-width="0.9"/><path d="M4.6 0.4L6.6 1.5L5 3.2" fill="none" stroke="#e79a70" stroke-width="0.8"/></svg>
<svg class="a" style="left:138px;top:249.5px" width="9" height="9" viewBox="0 0 9 9"><rect width="9" height="9" fill="#3f7ef5"/><path d="M2 4.6L3.8 6.3L7.2 2.6" stroke="#fff" stroke-width="1.4" fill="none"/></svg>
<div class="a lbl org" style="left:14px;top:266.7px;">Type</div>
<svg class="a" style="left:128px;top:267.7px" width="8" height="8" viewBox="0 0 8 8"><path d="M6.8 4A2.9 2.9 0 1 1 5.6 1.6" fill="none" stroke="#e79a70" stroke-width="0.9"/><path d="M4.6 0.4L6.6 1.5L5 3.2" fill="none" stroke="#e79a70" stroke-width="0.8"/></svg>
<div class="a " style="left:138px;top:264.2px;width:67px;height:15px;border:1px solid #e6e6e6;background:#fff"></div>
<svg class="a" style="left:143px;top:270px" width="6" height="4" viewBox="0 0 6 4"><path d="M0.5 0.8L3 3L5.5 0.8" stroke="#b0b0b0" stroke-width="0.7" fill="none"/></svg>
<div class="a bt" style="left:150px;top:266.7px;">tree(manual)</div>
<div class="a lbl" style="left:14px;top:283.3px;">Style</div>
<div class="a " style="left:138px;top:280.8px;width:67px;height:15px;border:1px solid #e6e6e6;background:#fff"></div>
<svg class="a" style="left:143px;top:287px" width="6" height="4" viewBox="0 0 6 4"><path d="M0.5 0.8L3 3L5.5 0.8" stroke="#b0b0b0" stroke-width="0.7" fill="none"/></svg>
<div class="a bt" style="left:150px;top:283.3px;">Default</div>
<div class="a lbl" style="left:14px;top:300px;">Threshold angle</div>
<div class="a " style="left:138px;top:297.5px;width:67px;height:15px;border:1px solid #e6e6e6;background:#eeeeee"></div>
<svg class="a" style="left:140px;top:299.5px" width="7" height="11" viewBox="0 0 7 11"><path d="M1 4L3.5 1.6L6 4M1 7L3.5 9.4L6 7" stroke="#b8b8b8" stroke-width="0.7" fill="none"/></svg>
<div class="a bt" style="left:152px;top:300px;color:#9a9a9a">30</div>
<div class="a lbl" style="left:14px;top:317px;">On build plate only</div>
<div class="a " style="left:138px;top:317.5px;width:9px;height:9px;border:1px solid #cfcfcf;background:#fff"></div>
<div class="a lbl" style="left:14px;top:333.8px;">Remove small overhangs</div>
<svg class="a" style="left:138px;top:334.3px" width="9" height="9" viewBox="0 0 9 9"><rect width="9" height="9" fill="#3f7ef5"/><path d="M2 4.6L3.8 6.3L7.2 2.6" stroke="#fff" stroke-width="1.4" fill="none"/></svg>
<svg class="a" style="left:3px;top:352px" width="10" height="10" viewBox="0 0 10 10"><path d="M1 1V8.5H9V1" fill="none" stroke="#555" stroke-width="1"/><path d="M0.5 9H9.5" stroke="#555" stroke-width="1.2"/></svg>
<div class="a sec" style="left:16px;top:352.7px;">Raft</div>
<div class="a " style="left:56px;top:357.2px;width:170px;height:1px;background:#f2f2f2"></div>
<div class="a lbl" style="left:14px;top:370.4px;">Raft layers</div>
<div class="a " style="left:138px;top:367.9px;width:67px;height:15px;border:1px solid #e6e6e6;background:#fff"></div>
<svg class="a" style="left:140px;top:369.9px" width="7" height="11" viewBox="0 0 7 11"><path d="M1 4L3.5 1.6L6 4M1 7L3.5 9.4L6 7" stroke="#b8b8b8" stroke-width="0.7" fill="none"/></svg>
<div class="a bt" style="left:152px;top:370.4px;">0</div>
<div class="a unit" style="left:184px;top:373.5px">layers</div>
<svg class="a" style="left:3px;top:389px" width="10" height="10" viewBox="0 0 10 10"><rect x="0.5" y="1" width="9" height="8" rx="1" fill="#e6e6e6" stroke="#999" stroke-width="0.7"/><path d="M3.5 1V9M6.5 1V9" stroke="#999" stroke-width="0.7"/></svg>
<div class="a sec" style="left:16px;top:389.5px;">Filament for Supports</div>
<div class="a " style="left:126px;top:394.0px;width:100px;height:1px;background:#f2f2f2"></div>
<div class="a lbl" style="left:14px;top:407.9px;">Support/raft base</div>
<div class="a " style="left:138px;top:405.4px;width:67px;height:15px;border:1px solid #e6e6e6;background:#fff"></div>
<svg class="a" style="left:143px;top:411.5px" width="6" height="4" viewBox="0 0 6 4"><path d="M0.5 0.8L3 3L5.5 0.8" stroke="#b0b0b0" stroke-width="0.7" fill="none"/></svg>
<div class="a bt" style="left:150px;top:407.9px;">Default</div>
<div class="a lbl" style="left:14px;top:424.6px;">Support/raft interface</div>
<div class="a " style="left:138px;top:422.1px;width:67px;height:15px;border:1px solid #e6e6e6;background:#fff"></div>
<svg class="a" style="left:143px;top:428px" width="6" height="4" viewBox="0 0 6 4"><path d="M0.5 0.8L3 3L5.5 0.8" stroke="#b0b0b0" stroke-width="0.7" fill="none"/></svg>
<div class="a bt" style="left:150px;top:424.6px;">Default</div>
<svg class="a" style="left:3px;top:443px" width="11" height="11" viewBox="0 0 11 11"><circle cx="4" cy="4.5" r="3" fill="none" stroke="#555" stroke-width="0.9"/><circle cx="7" cy="7" r="3" fill="none" stroke="#555" stroke-width="0.9"/></svg>
<div class="a sec" style="left:16px;top:443.4px;">Advanced</div>
<div class="a " style="left:82px;top:447.9px;width:144px;height:1px;background:#f2f2f2"></div>
<div class="a lbl" style="left:14px;top:461.7px;">Initial layer density</div>
<div class="a " style="left:138px;top:459.2px;width:67px;height:15px;border:1px solid #e6e6e6;background:#fff"></div>
<div class="a bt" style="left:142px;top:461.7px;">90</div>
<div class="a unit" style="left:195px;top:465.2px">%</div>
<div class="a lbl" style="left:14px;top:479px;">Initial layer expansion</div>
<div class="a " style="left:138px;top:476.5px;width:67px;height:15px;border:1px solid #e6e6e6;background:#fff"></div>
<div class="a bt" style="left:142px;top:479px;">2</div>
<div class="a unit" style="left:189px;top:482.5px">mm</div>
<div class="a lbl" style="left:14px;top:495.7px;">Support wall loops</div>
<div class="a " style="left:138px;top:493.2px;width:67px;height:15px;border:1px solid #e6e6e6;background:#fff"></div>
<svg class="a" style="left:140px;top:495.2px" width="7" height="11" viewBox="0 0 7 11"><path d="M1 4L3.5 1.6L6 4M1 7L3.5 9.4L6 7" stroke="#b8b8b8" stroke-width="0.7" fill="none"/></svg>
<div class="a bt" style="left:152px;top:495.7px;">0</div>
<div class="a lbl" style="left:14px;top:512.3px;">Top Z distance</div>
<div class="a " style="left:138px;top:509.79999999999995px;width:67px;height:15px;border:1px solid #e6e6e6;background:#fff"></div>
<div class="a bt" style="left:142px;top:512.3px;">0.2</div>
<div class="a unit" style="left:189px;top:515.8px">mm</div>
<div class="a lbl" style="left:14px;top:529px;">Bottom Z distance</div>
<div class="a " style="left:138px;top:526.5px;width:67px;height:15px;border:1px solid #e6e6e6;background:#fff"></div>
<div class="a bt" style="left:142px;top:529px;">0.2</div>
<div class="a unit" style="left:189px;top:532.5px">mm</div>
<div class="a lbl" style="left:14px;top:546px;">Base pattern</div>
<div class="a " style="left:138px;top:543.5px;width:67px;height:15px;border:1px solid #e6e6e6;background:#fff"></div>
<svg class="a" style="left:143px;top:549.5px" width="6" height="4" viewBox="0 0 6 4"><path d="M0.5 0.8L3 3L5.5 0.8" stroke="#b0b0b0" stroke-width="0.7" fill="none"/></svg>
<div class="a bt" style="left:150px;top:546px;">Default</div>
<div class="a lbl" style="left:14px;top:563px;">Base pattern spacing</div>
<div class="a " style="left:138px;top:560.5px;width:67px;height:15px;border:1px solid #e6e6e6;background:#fff"></div>
<div class="a bt" style="left:142px;top:563px;">2.5</div>
<div class="a unit" style="left:189px;top:566.5px">mm</div>
<div class="a " style="left:138px;top:577.5px;width:67px;height:15px;border:1px solid #e6e6e6;background:#fff"></div>
<div class="a " style="left:767px;top:38px;width:243px;height:315.5px;background:#424242"></div>
<div class="a " style="left:767px;top:38px;width:243px;height:16px;background:#2d2d2d"></div>
<svg class="a" style="left:774px;top:43px" width="8" height="7" viewBox="0 0 8 7"><path d="M1 4L4 1.5L7 4M1 6.5L4 4L7 6.5" stroke="#cfcfcf" stroke-width="0.9" fill="none"/></svg>
<div class="a lgb" style="left:789px;top:41.5px;font-size:7.3px">Color Scheme</div>
<div class="a " style="left:841px;top:42.5px;width:110px;height:10.5px;background:#222"></div>
<svg class="a" style="left:843px;top:46.5px" width="6" height="4" viewBox="0 0 6 4"><path d="M0.5 0.8L3 3L5.5 0.8" stroke="#ddd" stroke-width="0.9" fill="none"/></svg>
<div class="a lg" style="left:854px;top:43px;color:#e0e0e0">Line Type</div>
<div class="a " style="left:767px;top:54px;width:243px;height:12.3px;background:#3b3b3b"></div>
<div class="a lgb" style="left:774px;top:56px;">Line Type</div>
<div class="a lgb" style="left:844px;top:56px;">Time</div>
<div class="a lgb" style="left:879px;top:56px;">Percent</div>
<div class="a lgb" style="left:913px;top:56px;">Used filament</div>
<div class="a lgb" style="left:978px;top:56px;">Display</div>
<div class="a " style="left:767px;top:66.3px;width:243px;height:1.2px;background:#767676"></div>
<div class="a " style="left:774px;top:70.3px;width:6px;height:6px;background:#f4d43b"></div>
<div class="a lg" style="left:784px;top:68.3px;">Inner wall</div>
<div class="a lg" style="left:844px;top:68.3px;">46m28s</div>
<div class="a lg" style="left:879px;top:68.3px;">18.3%</div>
<div class="a lg" style="left:913px;top:68.3px;">8.88 m</div>
<div class="a lg" style="left:944px;top:68.3px;">25.64 g</div>
<svg class="a" style="left:981px;top:68.8px" width="10" height="9" viewBox="0 0 10 9"><rect width="10" height="9" fill="#505050"/><path d="M2 4.5L4 6.7L8 2" stroke="#3f7ef5" stroke-width="1.5" fill="none"/></svg>
<div class="a " style="left:774px;top:82.11px;width:6px;height:6px;background:#f08a3c"></div>
<div class="a lg" style="left:784px;top:80.11px;">Outer wall</div>
<div class="a lg" style="left:844px;top:80.11px;">49m52s</div>
<div class="a lg" style="left:879px;top:80.11px;">19.6%</div>
<div class="a lg" style="left:913px;top:80.11px;">8.40 m</div>
<div class="a lg" style="left:944px;top:80.11px;">24.26 g</div>
<svg class="a" style="left:981px;top:80.61px" width="10" height="9" viewBox="0 0 10 9"><rect width="10" height="9" fill="#505050"/><path d="M2 4.5L4 6.7L8 2" stroke="#3f7ef5" stroke-width="1.5" fill="none"/></svg>
<div class="a " style="left:774px;top:93.92px;width:6px;height:6px;background:#2440f5"></div>
<div class="a lg" style="left:784px;top:91.92px;">Overhang wall</div>
<div class="a lg" style="left:844px;top:91.92px;">7s</div>
<div class="a lg" style="left:879px;top:91.92px;">&lt;0.1%</div>
<div class="a lg" style="left:913px;top:91.92px;">0.01 m</div>
<div class="a lg" style="left:944px;top:91.92px;">0.02 g</div>
<svg class="a" style="left:981px;top:92.42px" width="10" height="9" viewBox="0 0 10 9"><rect width="10" height="9" fill="#505050"/><path d="M2 4.5L4 6.7L8 2" stroke="#3f7ef5" stroke-width="1.5" fill="none"/></svg>
<div class="a " style="left:774px;top:105.72999999999999px;width:6px;height:6px;background:#c2392e"></div>
<div class="a lg" style="left:784px;top:103.72999999999999px;">Sparse infill</div>
<div class="a lg" style="left:844px;top:103.72999999999999px;">1h33m</div>
<div class="a lg" style="left:879px;top:103.72999999999999px;">36.6%</div>
<div class="a lg" style="left:913px;top:103.72999999999999px;">17.33 m</div>
<div class="a lg" style="left:944px;top:103.72999999999999px;">50.03 g</div>
<svg class="a" style="left:981px;top:104.22999999999999px" width="10" height="9" viewBox="0 0 10 9"><rect width="10" height="9" fill="#505050"/><path d="M2 4.5L4 6.7L8 2" stroke="#3f7ef5" stroke-width="1.5" fill="none"/></svg>
<div class="a " style="left:774px;top:117.53999999999999px;width:6px;height:6px;background:#a24ed0"></div>
<div class="a lg" style="left:784px;top:115.53999999999999px;">Internal solid infill</div>
<div class="a lg" style="left:844px;top:115.53999999999999px;">7m39s</div>
<div class="a lg" style="left:879px;top:115.53999999999999px;">3.0%</div>
<div class="a lg" style="left:913px;top:115.53999999999999px;">1.09 m</div>
<div class="a lg" style="left:944px;top:115.53999999999999px;">3.13 g</div>
<svg class="a" style="left:981px;top:116.03999999999999px" width="10" height="9" viewBox="0 0 10 9"><rect width="10" height="9" fill="#505050"/><path d="M2 4.5L4 6.7L8 2" stroke="#3f7ef5" stroke-width="1.5" fill="none"/></svg>
<div class="a " style="left:774px;top:129.35px;width:6px;height:6px;background:#f0493e"></div>
<div class="a lg" style="left:784px;top:127.35px;">Top surface</div>
<div class="a lg" style="left:844px;top:127.35px;">1m2s</div>
<div class="a lg" style="left:879px;top:127.35px;">0.4%</div>
<div class="a lg" style="left:913px;top:127.35px;">0.09 m</div>
<div class="a lg" style="left:944px;top:127.35px;">0.25 g</div>
<svg class="a" style="left:981px;top:127.85px" width="10" height="9" viewBox="0 0 10 9"><rect width="10" height="9" fill="#505050"/><path d="M2 4.5L4 6.7L8 2" stroke="#3f7ef5" stroke-width="1.5" fill="none"/></svg>
<div class="a " style="left:774px;top:141.16px;width:6px;height:6px;background:#7b62e0"></div>
<div class="a lg" style="left:784px;top:139.16px;">Bottom surface</div>
<div class="a lg" style="left:844px;top:139.16px;">1m40s</div>
<div class="a lg" style="left:879px;top:139.16px;">0.7%</div>
<div class="a lg" style="left:913px;top:139.16px;">0.19 m</div>
<div class="a lg" style="left:944px;top:139.16px;">0.53 g</div>
<svg class="a" style="left:981px;top:139.66px" width="10" height="9" viewBox="0 0 10 9"><rect width="10" height="9" fill="#505050"/><path d="M2 4.5L4 6.7L8 2" stroke="#3f7ef5" stroke-width="1.5" fill="none"/></svg>
<div class="a " style="left:774px;top:152.97px;width:6px;height:6px;background:#4f8ed0"></div>
<div class="a lg" style="left:784px;top:150.97px;">Bridge</div>
<div class="a lg" style="left:844px;top:150.97px;">1m17s</div>
<div class="a lg" style="left:879px;top:150.97px;">0.5%</div>
<div class="a lg" style="left:913px;top:150.97px;">0.16 m</div>
<div class="a lg" style="left:944px;top:150.97px;">0.45 g</div>
<svg class="a" style="left:981px;top:151.47px" width="10" height="9" viewBox="0 0 10 9"><rect width="10" height="9" fill="#505050"/><path d="M2 4.5L4 6.7L8 2" stroke="#3f7ef5" stroke-width="1.5" fill="none"/></svg>
<div class="a " style="left:774px;top:164.78px;width:6px;height:6px;background:#ffffff"></div>
<div class="a lg" style="left:784px;top:162.78px;">Gap infill</div>
<div class="a lg" style="left:844px;top:162.78px;">4m15s</div>
<div class="a lg" style="left:879px;top:162.78px;">1.7%</div>
<div class="a lg" style="left:913px;top:162.78px;">0.41 m</div>
<div class="a lg" style="left:944px;top:162.78px;">1.17 g</div>
<svg class="a" style="left:981px;top:163.28px" width="10" height="9" viewBox="0 0 10 9"><rect width="10" height="9" fill="#505050"/><path d="M2 4.5L4 6.7L8 2" stroke="#3f7ef5" stroke-width="1.5" fill="none"/></svg>
<div class="a " style="left:774px;top:176.59px;width:6px;height:6px;background:#22e022"></div>
<div class="a lg" style="left:784px;top:174.59px;">Support</div>
<div class="a lg" style="left:844px;top:174.59px;">17m47s</div>
<div class="a lg" style="left:879px;top:174.59px;">7.0%</div>
<div class="a lg" style="left:913px;top:174.59px;">1.89 m</div>
<div class="a lg" style="left:944px;top:174.59px;">5.46 g</div>
<svg class="a" style="left:981px;top:175.09px" width="10" height="9" viewBox="0 0 10 9"><rect width="10" height="9" fill="#505050"/><path d="M2 4.5L4 6.7L8 2" stroke="#3f7ef5" stroke-width="1.5" fill="none"/></svg>
<div class="a " style="left:774px;top:188.4px;width:6px;height:6px;background:#118a11"></div>
<div class="a lg" style="left:784px;top:186.4px;">Support interface</div>
<div class="a lg" style="left:844px;top:186.4px;">55s</div>
<div class="a lg" style="left:879px;top:186.4px;">0.4%</div>
<div class="a lg" style="left:913px;top:186.4px;">0.08 m</div>
<div class="a lg" style="left:944px;top:186.4px;">0.24 g</div>
<svg class="a" style="left:981px;top:186.9px" width="10" height="9" viewBox="0 0 10 9"><rect width="10" height="9" fill="#505050"/><path d="M2 4.5L4 6.7L8 2" stroke="#3f7ef5" stroke-width="1.5" fill="none"/></svg>
<div class="a " style="left:774px;top:200.20999999999998px;width:6px;height:6px;background:#4fd09a"></div>
<div class="a lg" style="left:784px;top:198.20999999999998px;">Custom</div>
<div class="a lg" style="left:844px;top:198.20999999999998px;">11s</div>
<div class="a lg" style="left:879px;top:198.20999999999998px;">&lt;0.1%</div>
<div class="a lg" style="left:913px;top:198.20999999999998px;">0.01 m</div>
<div class="a lg" style="left:944px;top:198.20999999999998px;">0.04 g</div>
<svg class="a" style="left:981px;top:198.70999999999998px" width="10" height="9" viewBox="0 0 10 9"><rect width="10" height="9" fill="#505050"/><path d="M2 4.5L4 6.7L8 2" stroke="#3f7ef5" stroke-width="1.5" fill="none"/></svg>
<div class="a " style="left:774px;top:212.01999999999998px;width:6px;height:6px;background:#2838a8"></div>
<div class="a lg" style="left:784px;top:210.01999999999998px;">Travel</div>
<div class="a lg" style="left:844px;top:210.01999999999998px;">30m1s</div>
<div class="a lg" style="left:879px;top:210.01999999999998px;">11.8%</div>
<div class="a " style="left:981px;top:210.51999999999998px;width:10px;height:9px;background:#505050"></div>
<div class="a " style="left:774px;top:223.82999999999998px;width:6px;height:6px;background:#e635e6"></div>
<div class="a lg" style="left:784px;top:221.82999999999998px;">Retract</div>
<div class="a " style="left:981px;top:222.32999999999998px;width:10px;height:9px;background:#505050"></div>
<div class="a " style="left:774px;top:235.64px;width:6px;height:6px;background:#3aa8d8"></div>
<div class="a lg" style="left:784px;top:233.64px;">Unretract</div>
<div class="a " style="left:981px;top:234.14px;width:10px;height:9px;background:#505050"></div>
<div class="a " style="left:774px;top:247.45px;width:6px;height:6px;background:#f2f20a"></div>
<div class="a lg" style="left:784px;top:245.45px;">Wipe</div>
<div class="a " style="left:981px;top:245.95px;width:10px;height:9px;background:#505050"></div>
<div class="a " style="left:774px;top:259.26px;width:6px;height:6px;background:#e8e8e8"></div>
<div class="a lg" style="left:784px;top:257.26px;">Seams</div>
<svg class="a" style="left:981px;top:257.76px" width="10" height="9" viewBox="0 0 10 9"><rect width="10" height="9" fill="#505050"/><path d="M2 4.5L4 6.7L8 2" stroke="#3f7ef5" stroke-width="1.5" fill="none"/></svg>
<div class="a lgb" style="left:774px;top:273.8px;">Total Estimation</div>
<div class="a " style="left:767px;top:285px;width:243px;height:1.2px;background:#9a9a9a"></div>
<div class="a lg" style="left:774px;top:286.7px;">Total Filament:</div>
<div class="a lg" style="left:843.5px;top:286.7px;">38.53 m</div>
<div class="a lg" style="left:878.6px;top:286.7px;">111.22 g</div>
<div class="a lg" style="left:774px;top:297.46999999999997px;">Model Filament:</div>
<div class="a lg" style="left:843.5px;top:297.46999999999997px;">36.56 m</div>
<div class="a lg" style="left:878.6px;top:297.46999999999997px;">105.53 g</div>
<div class="a lg" style="left:774px;top:308.24px;">Cost:</div>
<div class="a lg" style="left:843.5px;top:308.24px;">0.00</div>
<div class="a lg" style="left:774px;top:319.01px;">Prepare time:</div>
<div class="a lg" style="left:843.5px;top:319.01px;">9s</div>
<div class="a lg" style="left:774px;top:329.78px;">Model printing time:</div>
<div class="a lg" style="left:843.5px;top:329.78px;">4h14m</div>
<div class="a lg" style="left:774px;top:340.54999999999995px;">Total time:</div>
<div class="a lg" style="left:843.5px;top:340.54999999999995px;">4h15m</div>
</body></html>
